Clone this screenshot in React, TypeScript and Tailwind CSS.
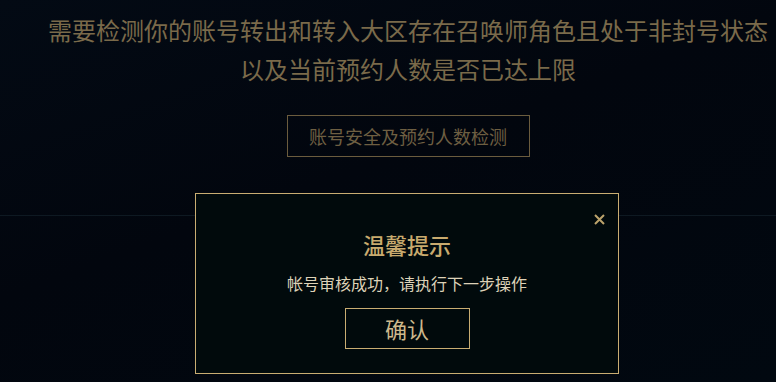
export default function App() {
  return (
    <div
      className="relative w-full h-[382px] overflow-hidden bg-[#02070f] bg-[linear-gradient(160deg,#030a14_0%,#02060e_45%,#010810_100%)]"
      style={{ fontFamily: '"Noto Sans CJK SC", "Noto Sans", sans-serif' }}
    >
      {/* Page content */}
      <div className="flex flex-col items-center pl-[40px] pt-[10px]">
        <p className="text-[24px] leading-[40px] text-[#7a6a4a] text-center">
          需要检测你的账号转出和转入大区存在召唤师角色且处于非封号状态
        </p>
        <p className="text-[24px] leading-[38px] text-[#7a6a4a] text-center">
          以及当前预约人数是否已达上限
        </p>
        <button className="mt-[27px] h-[42px] w-[243px] border border-[#6b5c3e] text-[18px] text-[#6e5f42] flex items-center justify-center">
          账号安全及预约人数检测
        </button>
      </div>
      <div className="mt-[58px] h-px w-full bg-[#0e1922]" />

      {/* Modal */}
      <div className="absolute left-[195px] top-[193px] w-[424px] h-[181px] border border-[#c9ad72] bg-[#010a0c] flex flex-col items-center">
        <button className="absolute right-[13px] top-[20px] w-[11px] h-[11px]">
          <svg viewBox="0 0 11 11" className="w-[11px] h-[11px]">
            <path d="M1 1L10 10M10 1L1 10" stroke="#bca36c" strokeWidth="2" />
          </svg>
        </button>
        <h2 className="mt-[34px] text-[22px] leading-[32px] font-medium text-[#c8aa6e]">温馨提示</h2>
        <p className="mt-[11px] text-[16px] leading-[24px] text-[#ddd2b8]">
          帐号审核成功，请执行下一步操作
        </p>
        <button className="mt-[13px] h-[41px] w-[125px] border border-[#c9ad72] text-[22px] text-[#cdb88c] flex items-center justify-center">
          确认
        </button>
      </div>
    </div>
  );
}
